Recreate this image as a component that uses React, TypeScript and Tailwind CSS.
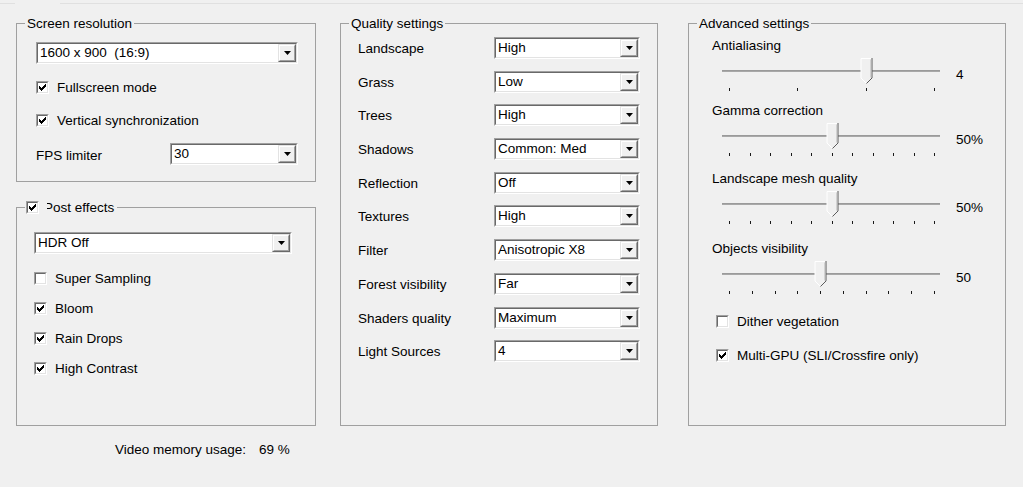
import React from 'react';

function DropButton() {
  return (
    <span className="flex h-[18px] w-[18px] shrink-0 border border-t-[#e3e3e3] border-l-[#e3e3e3] border-b-[#696969] border-r-[#696969]">
      <span className="flex flex-1 items-center justify-center border border-t-white border-l-white border-b-[#a0a0a0] border-r-[#a0a0a0] bg-[#f0f0f0]">
        <svg width="7" height="4" viewBox="0 0 7 4">
          <path d="M0 0h7L3.5 4z" fill="#000" />
        </svg>
      </span>
    </span>
  );
}

function Combo({ value, className }: { value: string; className: string }) {
  return (
    <div
      className={`flex h-[22px] shrink-0 border border-t-[#a0a0a0] border-l-[#a0a0a0] border-b-white border-r-white ${className}`}
    >
      <div className="flex flex-1 items-center border border-t-[#696969] border-l-[#696969] border-b-[#e3e3e3] border-r-[#e3e3e3] bg-white">
        <span className="mb-[1px] flex-1 whitespace-pre pl-[2px] leading-[15px]">{value}</span>
        <DropButton />
      </div>
    </div>
  );
}

function CheckBox({ checked }: { checked: boolean }) {
  // classic 7x7 check mark, one 1x3 column per x
  const cols = [2, 3, 4, 3, 2, 1, 0];
  return (
    <span className="flex h-[13px] w-[13px] shrink-0 border border-t-[#a0a0a0] border-l-[#a0a0a0] border-b-white border-r-white">
      <span className="flex flex-1 border border-t-[#696969] border-l-[#696969] border-b-[#e3e3e3] border-r-[#e3e3e3] bg-white">
        {checked && (
          <svg width="9" height="9" viewBox="0 0 9 9">
            {cols.map((top, i) => (
              <rect key={i} x={1 + i} y={1 + top} width="1" height="3" fill="#000" />
            ))}
          </svg>
        )}
      </span>
    </span>
  );
}

function CheckRow({ label, checked, className }: { label: string; checked: boolean; className: string }) {
  return (
    <div className={`flex h-[15px] items-center gap-[8px] ${className}`}>
      <CheckBox checked={checked} />
      <span className="leading-[15px]">{label}</span>
    </div>
  );
}

function Slider({ ticks, index }: { ticks: number; index: number }) {
  const x0 = 11;
  const x1 = 216;
  const xs = Array.from({ length: ticks }, (_, i) => Math.round(x0 + ((x1 - x0) * i) / (ticks - 1)));
  const c = xs[index] + 0.5;
  return (
    <svg width="232" height="40" viewBox="0 0 232 40" className="shrink-0">
      <rect x="4" y="17" width="218" height="1" fill="#9a9a9a" />
      <rect x="4" y="18" width="218" height="1" fill="#a8a8a8" />
      {xs.map((x, i) => (
        <rect key={i} x={x} y="35" width="1" height="3" fill="#1a1a1a" />
      ))}
      <polygon
        points={`${c - 5.5},5.5 ${c + 5.5},5.5 ${c + 5.5},25 ${c},30.5 ${c - 5.5},25`}
        fill="#f0f0f0"
      />
      <polyline points={`${c},30.5 ${c - 5.5},25 ${c - 5.5},5.5 ${c + 5},5.5`} fill="none" stroke="#fff" />
      <polyline points={`${c + 5.5},5 ${c + 5.5},25 ${c},30.5`} fill="none" stroke="#5a5a5a" />
      <polyline points={`${c + 4.5},6.5 ${c + 4.5},24.5`} fill="none" stroke="#b4b4b4" />
    </svg>
  );
}

function SliderBlock({ label, ticks, index, value, className }: {
  label: string;
  ticks: number;
  index: number;
  value: string;
  className: string;
}) {
  return (
    <div className={className}>
      <div className="leading-[15px]">{label}</div>
      <div className="ml-[6px] flex items-start">
        <Slider ticks={ticks} index={index} />
        <span className="ml-[6px] mt-[14px] leading-[15px]">{value}</span>
      </div>
    </div>
  );
}

const quality: [string, string][] = [
  ['Landscape', 'High'],
  ['Grass', 'Low'],
  ['Trees', 'High'],
  ['Shadows', 'Common: Med'],
  ['Reflection', 'Off'],
  ['Textures', 'High'],
  ['Filter', 'Anisotropic X8'],
  ['Forest visibility', 'Far'],
  ['Shaders quality', 'Maximum'],
  ['Light Sources', '4'],
];

export default function App() {
  return (
    <div className="h-[487px] w-[1023px] overflow-hidden bg-[#f0f0f0] font-['Liberation_Sans',Arial,sans-serif] text-[13.5px] text-black">
      <div className="flex h-[4px]">
        <div className="w-[15px] border-b border-[#e0e0e0]" />
        <div className="w-[45px]" />
        <div className="flex-1 border-b border-[#e0e0e0]" />
      </div>

      <div className="flex items-start pl-[16px] pt-[12px]">
        {/* left column */}
        <div className="flex w-[300px] flex-col">
          <fieldset className="h-[166px] border border-[#a0a0a0]">
            <legend className="ml-[8px] px-[2px] leading-[15px]">Screen resolution</legend>
            <div className="flex flex-col pl-[19px] pt-[11px]">
              <Combo value="1600 x 900  (16:9)" className="w-[262px]" />
              <CheckRow label="Fullscreen mode" checked className="mt-[16px]" />
              <CheckRow label="Vertical synchronization" checked className="mt-[18px]" />
              <div className="mt-[15px] flex items-start">
                <span className="mt-[5px] w-[134px] leading-[15px]">FPS limiter</span>
                <Combo value="30" className="w-[128px]" />
              </div>
            </div>
          </fieldset>

          <fieldset className="mt-[18px] h-[226px] border border-[#a0a0a0]">
            <legend className="ml-[8px] px-[1px] leading-[15px]">
              <span className="flex items-center">
                <span className="relative z-10 bg-[#f0f0f0] pr-[8px]">
                  <CheckBox checked />
                </span>
                <span className="ml-[-3px] pr-[2px]">Post effects</span>
              </span>
            </legend>
            <div className="flex flex-col pl-[17px] pt-[17px]">
              <Combo value="HDR Off" className="w-[258px]" />
              <CheckRow label="Super Sampling" checked={false} className="mt-[17px]" />
              <CheckRow label="Bloom" checked className="mt-[15px]" />
              <CheckRow label="Rain Drops" checked className="mt-[15px]" />
              <CheckRow label="High Contrast" checked className="mt-[15px]" />
            </div>
          </fieldset>

          <div className="mt-[16px] flex pl-[99px] leading-[15px]">
            <span>Video memory usage:</span>
            <span className="ml-[13px]">69 %</span>
          </div>
        </div>

        {/* quality settings */}
        <fieldset className="ml-[24px] h-[410px] w-[318px] border border-[#a0a0a0]">
          <legend className="ml-[8px] px-[2px] leading-[15px]">Quality settings</legend>
          <div className="flex flex-col gap-[11.7px] pl-[17px] pt-[6px]">
            {quality.map(([label, value]) => (
              <div key={label} className="flex items-start">
                <span className="mt-[4px] w-[136px] leading-[15px]">{label}</span>
                <Combo value={value} className="w-[146px]" />
              </div>
            ))}
          </div>
        </fieldset>

        {/* advanced settings */}
        <fieldset className="ml-[30px] h-[410px] w-[318px] border border-[#a0a0a0]">
          <legend className="ml-[8px] px-[2px] leading-[15px]">Advanced settings</legend>
          <div className="flex flex-col pl-[23px]">
            <SliderBlock label="Antialiasing" ticks={4} index={2} value="4" className="mt-[7px]" />
            <SliderBlock label="Gamma correction" ticks={11} index={5} value="50%" className="mt-[10px]" />
            <SliderBlock label="Landscape mesh quality" ticks={11} index={5} value="50%" className="mt-[13px]" />
            <SliderBlock label="Objects visibility" ticks={10} index={4} value="50" className="mt-[15px]" />
            <CheckRow label="Dither vegetation" checked={false} className="ml-[4px] mt-[18px]" />
            <CheckRow label="Multi-GPU (SLI/Crossfire only)" checked className="ml-[4px] mt-[19px]" />
          </div>
        </fieldset>
      </div>
    </div>
  );
}
